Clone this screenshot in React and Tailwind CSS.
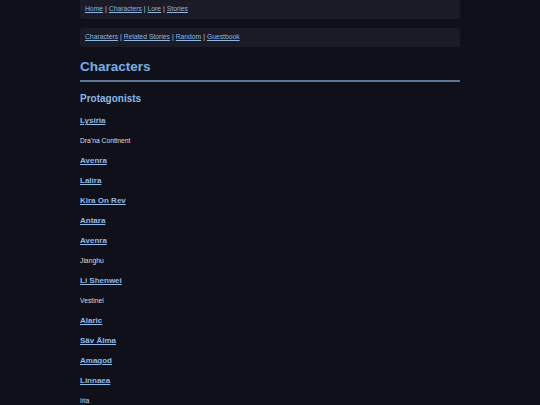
import React from "react";

const items = [
  { t: "Lysiria", link: true },
  { t: "Dra'na Continent" },
  { t: "Avenra", link: true },
  { t: "Lalíra", link: true },
  { t: "Kira On Rev", link: true },
  { t: "Antara", link: true },
  { t: "Avenra", link: true },
  { t: "Jianghu" },
  { t: "Li Shenwei", link: true },
  { t: "Vestinel" },
  { t: "Alaric", link: true },
  { t: "Säv Älma", link: true },
  { t: "Amagod", link: true },
  { t: "Linnaea", link: true },
  { t: "Iria" },
];

function Nav({ links, className }) {
  return (
    <div className={"rounded-[3px] bg-[#1a1b27] px-[5px] h-[19px] flex items-center text-[6.75px] text-[#c8ccd8] " + className}>
      {links.map((l, i) => (
        <React.Fragment key={i}>
          {i > 0 && <span className="mx-[2px]">|</span>}
          <a href="#" className="underline text-[#8fb6e0]">{l}</a>
        </React.Fragment>
      ))}
    </div>
  );
}

export default function App() {
  return (
    <div className="min-h-[405px] w-full bg-[#0f1019] overflow-hidden" style={{ fontFamily: '"Liberation Sans", Arial, sans-serif' }}>
      <div className="w-[380px] mx-auto">
        <Nav links={["Home", "Characters", "Lore", "Stories"]} className="rounded-t-none" />
        <Nav links={["Characters", "Related Stories", "Random", "Guestbook"]} className="mt-[9px]" />
        <h1 className="mt-[11px] text-[13.5px] font-bold text-[#75b0e6] leading-[18px]">Characters</h1>
        <div className="mt-[4px] h-[2px] bg-[#5b7593]" />
        <h2 className="mt-[10px] text-[10px] font-bold text-[#8ab8e4] leading-[14px]">Protagonists</h2>
        <div className="mt-[5px] flex flex-col">
          {items.map((it, i) =>
            it.link ? (
              <div key={i} className="h-[20px] flex items-center">
                <a href="#" className="text-[8px] font-bold underline text-[#8fbbe6]">{it.t}</a>
              </div>
            ) : (
              <div key={i} className="h-[20px] flex items-center text-[6.75px] text-[#dcdde3]">{it.t}</div>
            )
          )}
        </div>
      </div>
    </div>
  );
}
